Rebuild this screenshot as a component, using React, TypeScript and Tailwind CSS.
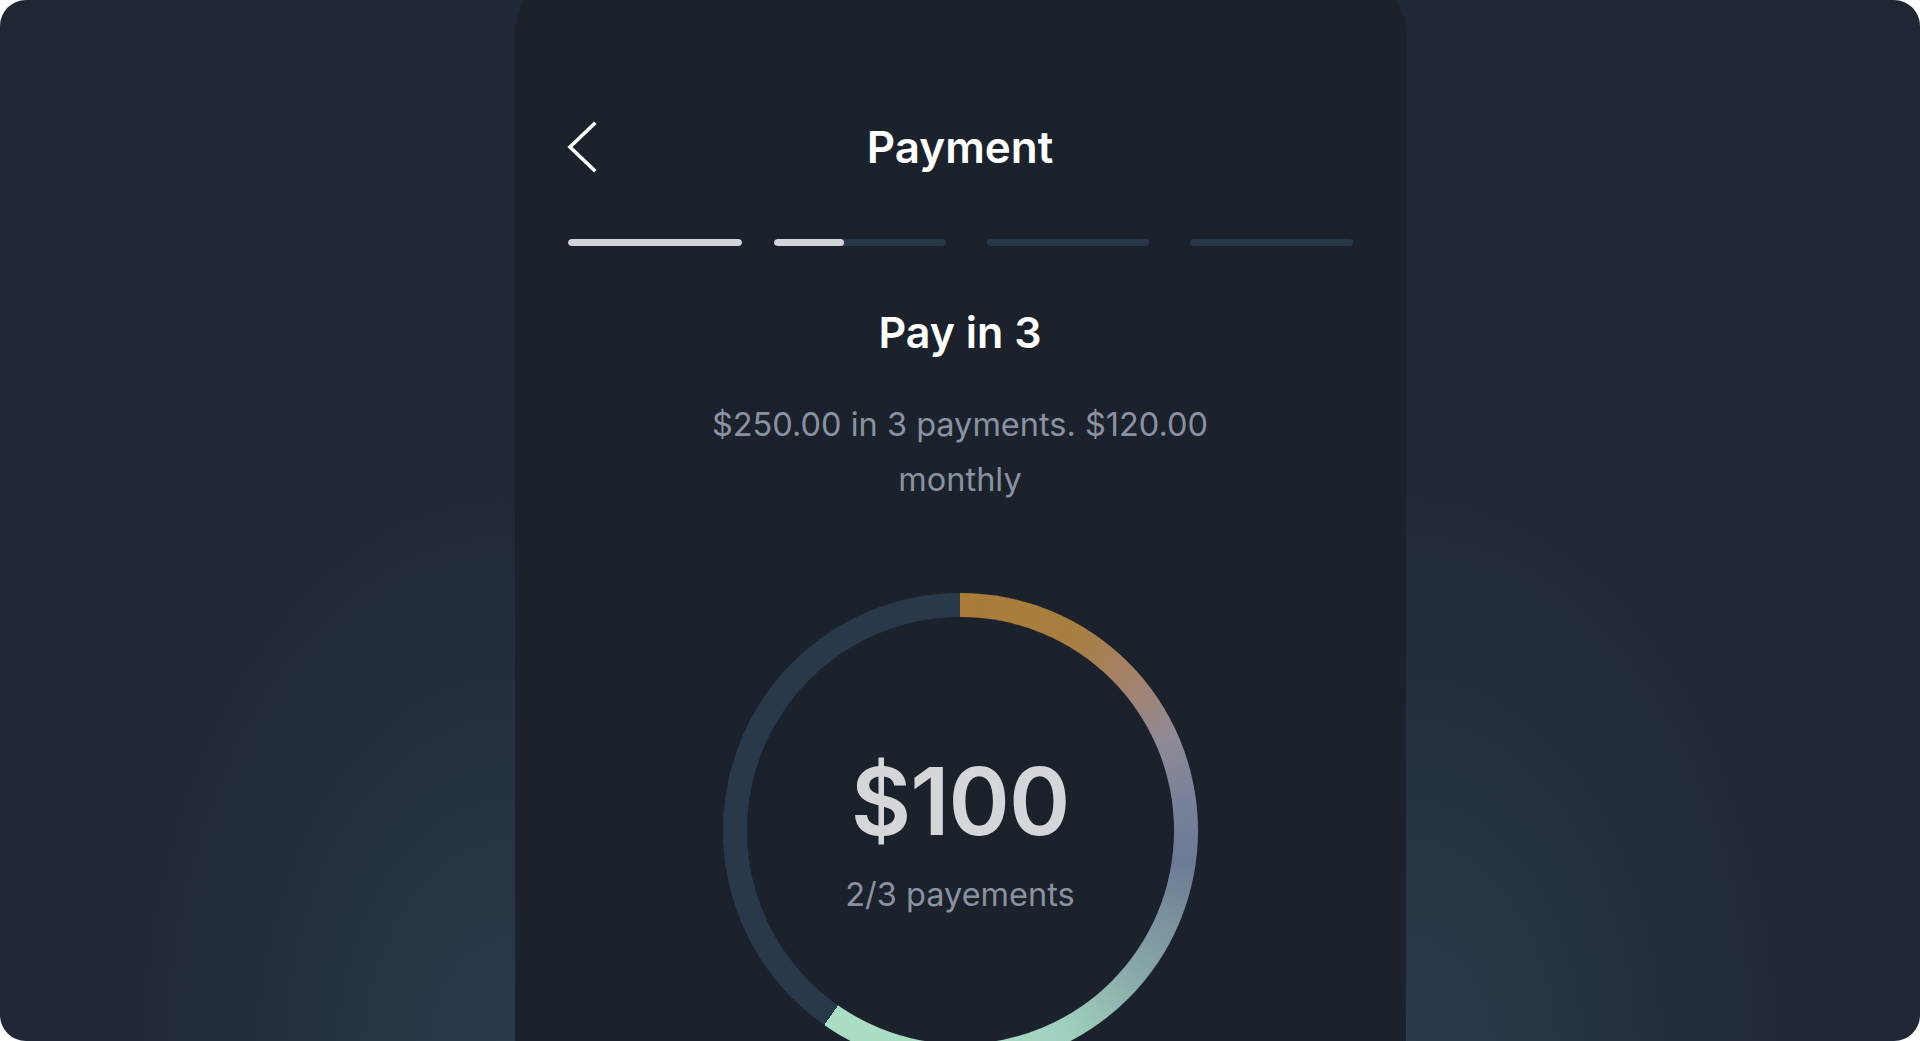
const bars = [
  { w: "w-[175px]", fill: "w-full" },
  { w: "w-[173px]", fill: "w-[70px]" },
  { w: "w-[163px]", fill: "w-0" },
  { w: "w-[163px]", fill: "w-0" },
];

function BackIcon() {
  return (
    <svg width="32" height="52" viewBox="0 0 32 52" fill="none" className="-ml-[1px]">
      <polyline points="27,3 3,26 27,49" stroke="#ffffff" strokeWidth="3.6" strokeLinecap="square" strokeLinejoin="miter" />
    </svg>
  );
}

export default function App() {
  return (
    <div className="w-[1920px] h-[1041px] bg-white font-['Inter','Noto_Sans',sans-serif]">
      <div className="w-full h-full rounded-[26px] overflow-hidden flex justify-center [background:radial-gradient(ellipse_400px_620px_at_510px_1070px,#2b3b4c,transparent),radial-gradient(ellipse_400px_620px_at_1410px_1070px,#2b3b4c,transparent),#1f2835]">
        <div className="w-[891px] h-[1120px] -mt-[28px] rounded-t-[62px] bg-[#1b222c] pt-[145px] px-[53px] flex flex-col items-center">
          {/* header */}
          <div className="w-full h-[60px] flex items-center">
            <div className="w-[120px] flex items-center">
              <BackIcon />
            </div>
            <h1 className="flex-1 text-center text-[44px] leading-[60px] font-semibold text-white">
              Payment
            </h1>
            <div className="w-[120px]" />
          </div>

          {/* steps */}
          <div className="w-full mt-[62px] flex items-center">
            {bars.map((b, i) => (
              <div
                key={i}
                className={`${b.w} h-[7px] rounded-full bg-[#293849] overflow-hidden ${i === 1 ? "ml-[32px]" : i > 1 ? "ml-[41px]" : ""}`}
              >
                <div className={`${b.fill} h-full rounded-full bg-[#d0d3d8]`} />
              </div>
            ))}
          </div>

          <h2 className="mt-[58px] text-[43px] leading-[56px] font-semibold text-white">Pay in 3</h2>
          <p className="mt-[37px] w-[560px] text-center text-[32.5px] leading-[55px] text-[#8a92a1]">
            $250.00 in 3 payments. $120.00 monthly
          </p>

          {/* ring */}
          <div className="mt-[86px] w-[475px] h-[475px] shrink-0 rounded-full p-[24px] bg-[conic-gradient(#a97c37_0deg,#a87e40_30deg,#a3826e_50deg,#8e8a96_66deg,#77819a_84deg,#6c7b94_98deg,#86a4a6_126deg,#9fd0bc_152deg,#a8dcc4_176deg,#a9dec5_215deg,#29394a_215deg)]">
            <div className="w-full h-full rounded-full bg-[#1b222c] flex flex-col items-center justify-center pt-[6px]">
              <div className="text-[93px] leading-none font-semibold text-[#d4d6da] tracking-[-1px]">$100</div>
              <div className="mt-[31px] text-[32.5px] leading-none text-[#8a92a1]">2/3 payements</div>
            </div>
          </div>
        </div>
      </div>
    </div>
  );
}
